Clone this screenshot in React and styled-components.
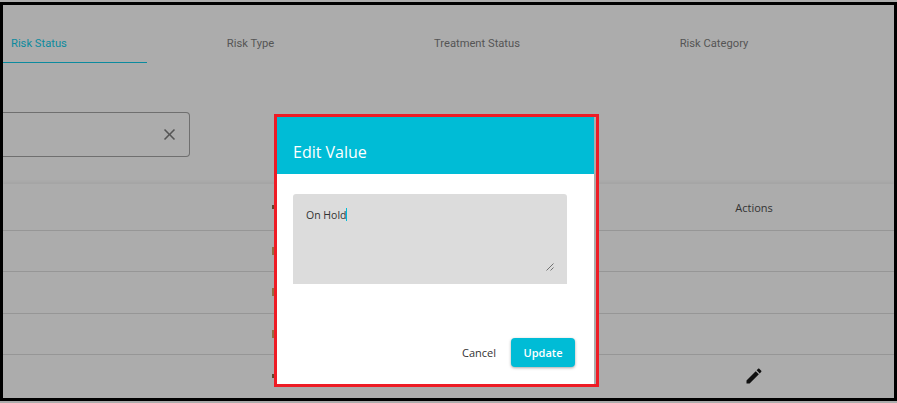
import React from 'react'
import styled, { createGlobalStyle } from 'styled-components'

const GlobalStyle = createGlobalStyle`
    html, body {
        margin: 0;
        padding: 0;
        background: #acacac;
    }
`

const rows = [1, 2, 3, 4]

function App() {
    return (
        <Page>
            <GlobalStyle />
            <Frame>
                <TabBar>
                    <FirstTab>Risk Status</FirstTab>
                    <Tab width={207}>Risk Type</Tab>
                    <Tab width={246}>Treatment Status</Tab>
                    <Tab width={228}>Risk Category</Tab>
                </TabBar>

                <SearchBox>
                    <ClearIcon viewBox="0 0 24 24">
                        <path d="M19 6.41L17.59 5 12 10.59 6.41 5 5 6.41 10.59 12 5 17.59 6.41 19 12 13.41 17.59 19 19 17.59 13.41 12z" />
                    </ClearIcon>
                </SearchBox>

                <Table>
                    <HeaderRow>
                        <Marker dark />
                        <ActionsCell>Actions</ActionsCell>
                    </HeaderRow>
                    {rows.map(row => (
                        <Row key={row} last={row === rows.length}>
                            <Marker dark={row === rows.length} />
                            <ActionsCell>
                                {row === rows.length && (
                                    <EditIcon viewBox="0 0 24 24">
                                        <path d="M3 17.25V21h3.75L17.81 9.94l-3.75-3.75L3 17.25zM20.71 7.04c.39-.39.39-1.02 0-1.41l-2.34-2.34c-.39-.39-1.02-.39-1.41 0l-1.83 1.83 3.75 3.75 1.83-1.83z" />
                                    </EditIcon>
                                )}
                            </ActionsCell>
                        </Row>
                    ))}
                </Table>
            </Frame>

            <Modal>
                <ModalPanel>
                    <ModalHeader>Edit Value</ModalHeader>
                    <ModalBody>
                        <ValueField>
                            <ValueText>On Hold<Caret /></ValueText>
                            <ResizeGrip viewBox="0 0 8 8">
                                <path d="M0.5 7.5L7.5 0.5M4.5 7.5L7.5 4.5" />
                            </ResizeGrip>
                        </ValueField>
                        <ModalFooter>
                            <CancelButton>Cancel</CancelButton>
                            <UpdateButton>Update</UpdateButton>
                        </ModalFooter>
                    </ModalBody>
                </ModalPanel>
            </Modal>
        </Page>
    )
}

export default App


const Page = styled.div`
    position: relative;
    width: 897px;
    height: 403px;
    padding: 2px 0;
    box-sizing: border-box;
    overflow: hidden;
    background: #acacac;
`

const Frame = styled.div`
    height: 399px;
    box-sizing: border-box;
    border: 3px solid #000;
    overflow: hidden;
    display: flex;
    flex-direction: column;
`

const TabBar = styled.div`
    display: flex;
    height: 58px;
    flex-shrink: 0;
`

const Tab = styled.div`
    width: ${props => props.width}px;
    box-sizing: border-box;
    display: flex;
    align-items: center;
    justify-content: center;
    padding-top: 19px;
    font-family: Roboto, sans-serif;
    font-size: 11.2px;
    color: #555;
`

const FirstTab = styled(Tab)`
    width: 144px;
    justify-content: flex-start;
    padding-left: 8px;
    color: #0b8a9e;
    border-bottom: 1px solid #0b8a9e;
`

const SearchBox = styled.div`
    width: 187px;
    height: 45px;
    margin-top: 49px;
    flex-shrink: 0;
    box-sizing: border-box;
    border: 1px solid #6f6f6f;
    border-left: none;
    border-radius: 0 4px 4px 0;
    display: flex;
    align-items: center;
    justify-content: flex-end;
    padding-right: 10px;
`

const ClearIcon = styled.svg`
    width: 19px;
    height: 19px;
    fill: #555;
`

const Table = styled.div`
    margin-top: 27px;
    display: flex;
    flex-direction: column;
    box-shadow: 0 -2px 3px rgba(0, 0, 0, 0.05);
`

const Row = styled.div`
    height: 41.34px;
    flex-shrink: 0;
    box-sizing: border-box;
    display: grid;
    grid-template-columns: 269px 2px 390px 180px 1fr;
    align-items: center;
    border-bottom: ${props => props.last ? 'none' : '1px solid #969696'};
`

const HeaderRow = styled(Row)`
    height: 47px;
`

const Marker = styled.span`
    grid-column: 2;
    height: ${props => props.dark ? '4px' : '8px'};
    background: ${props => props.dark ? '#5a4a30' : '#8f6f45'};
`

const ActionsCell = styled.div`
    grid-column: 4;
    display: flex;
    align-items: center;
    justify-content: center;
    font-family: "Open Sans", sans-serif;
    font-size: 11px;
    color: #333;
`

const EditIcon = styled.svg`
    width: 20px;
    height: 20px;
    fill: #111;
`

const Modal = styled.div`
    position: absolute;
    left: 274px;
    top: 114px;
    width: 325px;
    height: 273px;
    box-sizing: border-box;
    border: 3px solid #ee1c25;
    display: flex;
    background: #acacac;
    font-family: "Open Sans", sans-serif;
`

const ModalPanel = styled.div`
    width: 317px;
    display: flex;
    flex-direction: column;
    background: #fff;
`

const ModalHeader = styled.div`
    height: 57px;
    flex-shrink: 0;
    box-sizing: border-box;
    background: #00bcd6;
    color: #fff;
    font-size: 16px;
    padding: 24px 16px 0;
    line-height: 22px;
`

const ModalBody = styled.div`
    flex: 1;
    display: flex;
    flex-direction: column;
    padding: 20px 19px 17px 16px;
`

const ValueField = styled.div`
    position: relative;
    width: 274px;
    height: 90px;
    box-sizing: border-box;
    padding: 13px;
    background: #dcdcdc;
    border-radius: 3px 3px 0 0;
`

const ValueText = styled.div`
    font-size: 10.5px;
    line-height: 16px;
    color: #333;
`

const Caret = styled.span`
    display: inline-block;
    width: 1px;
    height: 13px;
    vertical-align: -2px;
    background: #00bcd6;
`

const ResizeGrip = styled.svg`
    position: absolute;
    right: 13px;
    bottom: 13px;
    width: 8px;
    height: 8px;
    fill: none;
    stroke: #555;
    stroke-width: 0.8;
`

const ModalFooter = styled.div`
    margin-top: auto;
    display: flex;
    align-items: center;
    justify-content: flex-end;
    gap: 15px;
`

const CancelButton = styled.div`
    font-size: 11px;
    color: #333;
`

const UpdateButton = styled.div`
    width: 64px;
    height: 29px;
    display: flex;
    align-items: center;
    justify-content: center;
    border-radius: 4px;
    background: #00bcd6;
    color: #fff;
    font-size: 11px;
    font-weight: 600;
    box-shadow: 0 1px 3px rgba(0, 0, 0, 0.35);
`
